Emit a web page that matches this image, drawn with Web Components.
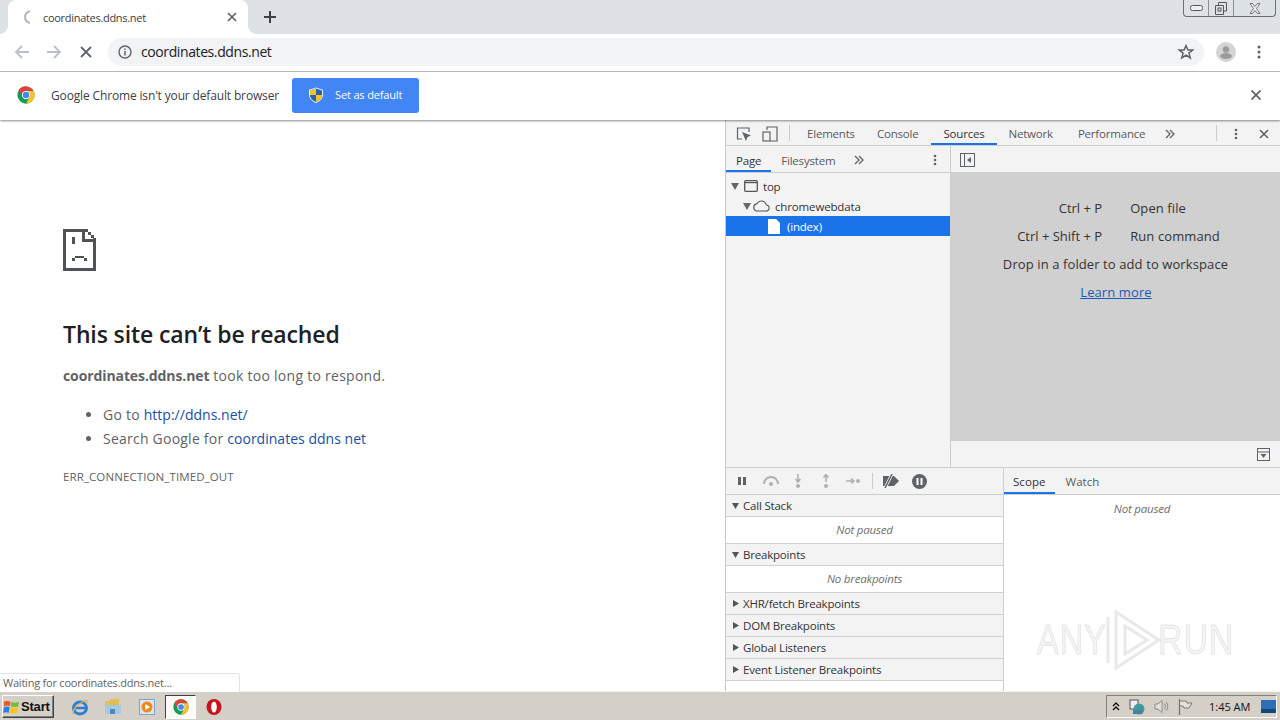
<!DOCTYPE html>
<html>
<head>
<meta charset="utf-8">
<title>coordinates.ddns.net</title>
<style>
html,body{margin:0;height:720px;overflow:hidden;background:#fff;font-family:"Open Sans","Noto Sans",sans-serif;}
body{display:flex;flex-direction:column;width:1280px;position:relative;}
.content{flex:none;height:571px;display:flex;}
</style>
</head>
<body>
<tab-strip></tab-strip>
<nav-bar></nav-bar>
<default-bar></default-bar>
<div class="content">
  <error-page></error-page>
  <dev-tools></dev-tools>
</div>
<task-bar></task-bar>
<status-bubble>Waiting for coordinates.ddns.net...</status-bubble>
<any-mark></any-mark>

<script>
const chromeLogo = s => `<svg width="${s}" height="${s}" viewBox="0 0 48 48" style="display:block">
  <circle cx="24" cy="24" r="23" fill="#0f9d58"/>
  <path d="M24 1A23 23 0 0 1 44 13H24A11 11 0 0 0 14 29L4 12A23 23 0 0 1 24 1Z" fill="#db4437"/>
  <path d="M44 13A23 23 0 0 1 24 47L33 30A11 11 0 0 0 24 13Z" fill="#fbc02d"/>
  <circle cx="24" cy="24" r="11" fill="#fff"/><circle cx="24" cy="24" r="8.5" fill="#4285f4"/></svg>`;

class TabStrip extends HTMLElement {
  constructor(){
    super();
    this.attachShadow({mode:"open"}).innerHTML = `
    <style>
    :host{display:flex;height:34px;background:#dee1e6;justify-content:space-between;font:11px "Open Sans",sans-serif;color:#3c4043;}
    .left{display:flex;align-items:flex-end;}
    .tab{position:relative;width:240px;height:34px;margin-left:8px;background:#fff;border-radius:8px 8px 0 0;display:flex;align-items:center;box-sizing:border-box;padding:0 11px 0 13px;}
    .tab::before,.tab::after{content:"";position:absolute;bottom:0;width:8px;height:8px;}
    .tab::before{left:-8px;background:radial-gradient(circle at 0 0,#dee1e6 7.5px,#fff 8px)}
    .tab::after{right:-8px;background:radial-gradient(circle at 100% 0,#dee1e6 7.5px,#fff 8px)}
    .tab svg.spin{margin-right:8px}
    .tab span{flex:1;letter-spacing:-.3px}
    .plus{margin:0 0 0 16px;align-self:center;display:block}
    .win{display:flex;align-self:flex-start;height:17px;border:1px solid #6a7078;border-top:none;border-radius:0 0 4px 4px;margin-right:4px;width:93px;box-sizing:border-box;}
    .win div{display:flex;align-items:center;justify-content:center;border-right:1px solid #8a9098;box-sizing:border-box}
    .win div:last-child{border:0}
    </style>
    <div class="left">
      <div class="tab">
        <svg class="spin" width="14" height="16" viewBox="0 0 14 16"><path d="M9 2.2A6 6 0 0 0 9 14" fill="none" stroke="#b4b7bb" stroke-width="2"/></svg>
        <span>coordinates.ddns.net</span>
        <svg width="10" height="10" viewBox="0 0 10 10"><path d="M1 1L9 9M9 1L1 9" stroke="#5f6368" stroke-width="1.7"/></svg>
      </div>
      <svg class="plus" width="12" height="12" viewBox="0 0 12 12"><path d="M6 0V12M0 6H12" stroke="#3c4043" stroke-width="2"/></svg>
    </div>
    <div class="win">
      <div style="width:25px"><svg width="13" height="6" viewBox="0 0 13 6"><rect x=".5" y=".5" width="12" height="5" rx="2" fill="#eef0f2" stroke="#555"/></svg></div>
      <div style="width:25px"><svg width="12" height="13" viewBox="0 0 12 13"><path d="M3.5 3V.5H11.5V9H9M.5 3.5H8.5V12.5H.5Z" fill="none" stroke="#555"/><rect x="3" y="6" width="3" height="3" fill="none" stroke="#555"/></svg></div>
      <div style="flex:1"><svg width="12" height="11" viewBox="0 0 12 11"><path d="M1 .5H3.5L6 3.5L8.5 .5H11L7.5 5.5L11 10.5H8.5L6 7.5L3.5 10.5H1L4.5 5.5Z" fill="#f0f2f4" stroke="#555" stroke-width=".8"/></svg></div>
    </div>`;
  }
}
customElements.define('tab-strip', TabStrip);

class NavBar extends HTMLElement {
  constructor(){
    super();
    this.attachShadow({mode:"open"}).innerHTML = `
    <style>
    :host{display:flex;align-items:center;height:38px;box-sizing:border-box;background:#fff;border-bottom:1px solid #bdbdbd;padding:0 0 0 14px;font:14px "Open Sans",sans-serif;color:#202124;}
    .nav{display:flex;gap:16px;align-items:center;margin-right:14px}
    .omni{width:1096px;height:28px;align-self:flex-start;margin-top:4px;border-radius:14px;background:#f1f3f4;display:flex;align-items:center;box-sizing:border-box;padding:0 10px 0 10px;}
    .omni span{flex:1;margin-left:9px;letter-spacing:-.4px;margin-top:-1px}
    .right{display:flex;align-items:center;margin-left:12px;gap:21px}
    .avatar{width:20px;height:20px;border-radius:50%;background:#d4d4d4;display:block}
    </style>
    <div class="nav">
      <svg width="16" height="16" viewBox="0 0 16 16"><path d="M15 8H2M8 2L2 8L8 14" fill="none" stroke="#bcc0c4" stroke-width="1.8"/></svg>
      <svg width="16" height="16" viewBox="0 0 16 16"><path d="M1 8H14M8 2L14 8L8 14" fill="none" stroke="#bcc0c4" stroke-width="1.8"/></svg>
      <svg width="16" height="16" viewBox="0 0 16 16"><path d="M3 3L13 13M13 3L3 13" fill="none" stroke="#5f6368" stroke-width="1.8"/></svg>
    </div>
    <div class="omni">
      <svg width="14" height="14" viewBox="0 0 14 14"><circle cx="7" cy="7" r="6" fill="none" stroke="#5f6368" stroke-width="1.4"/><path d="M7 6V10.5M7 3.4V5" stroke="#5f6368" stroke-width="1.5"/></svg>
      <span>coordinates.ddns.net</span>
      <svg width="16" height="16" viewBox="0 0 16 16"><path d="M8 1.6L9.9 6H14.8L10.9 9.1L12.3 14L8 11.2L3.7 14L5.1 9.1L1.2 6H6.1Z" fill="none" stroke="#5f6368" stroke-width="1.5"/></svg>
    </div>
    <div class="right">
      <svg class="avatar" viewBox="0 0 20 20"><circle cx="10" cy="7.5" r="3.2" fill="#9b9b9b"/><ellipse cx="10" cy="14" rx="6" ry="3" fill="#9b9b9b"/></svg>
      <svg width="4" height="14" viewBox="0 0 4 14"><circle cx="2" cy="2" r="1.5" fill="#5f6368"/><circle cx="2" cy="7" r="1.5" fill="#5f6368"/><circle cx="2" cy="12" r="1.5" fill="#5f6368"/></svg>
    </div>`;
  }
}
customElements.define('nav-bar', NavBar);

class DefaultBar extends HTMLElement {
  constructor(){
    super();
    this.attachShadow({mode:"open"}).innerHTML = `
    <style>
    :host{display:flex;align-items:center;height:49px;box-sizing:border-box;background:#fff;padding:0 0 1px 17px;font:12px "Open Sans",sans-serif;color:#3c4043;box-shadow:0 1px 2px rgba(0,0,0,.45);position:relative;z-index:2}
    .msg{margin-left:16px;letter-spacing:-.15px;width:241px;white-space:nowrap}
    button{all:unset;width:127px;height:35px;background:#4285f4;border-radius:3px;color:#fff;font:11px "Open Sans",sans-serif;letter-spacing:-.15px;display:flex;align-items:center;padding-left:16px;box-sizing:border-box;gap:11px;}
    button span{margin-top:-2px}
    .x{margin-left:auto;margin-right:19px}
    </style>
    ${chromeLogo(18)}
    <span class="msg">Google Chrome isn't your default browser</span>
    <button>
      <svg width="16" height="16" viewBox="0 0 16 16"><path d="M8 .4L15 2.8V8C15 12.2 11.2 14.8 8 16 4.8 14.8 1 12.2 1 8V2.8Z" fill="#e8eef8"/><path d="M8 1.6L14 3.5V8C14 11.6 10.8 13.8 8 14.9 5.2 13.8 2 11.6 2 8V3.5Z" fill="#2f5fb3"/><path d="M8 1.6V8H2V3.5Z" fill="#f3c623"/><path d="M8 8H14C14 11.6 10.8 13.8 8 14.9Z" fill="#f3c623"/></svg>
      <span>Set as default</span>
    </button>
    <svg class="x" width="10" height="10" viewBox="0 0 10 10"><path d="M.5 .5L9.5 9.5M9.5 .5L.5 9.5" stroke="#5f6368" stroke-width="1.8"/></svg>`;
  }
}
customElements.define('default-bar', DefaultBar);

class ErrorPage extends HTMLElement {
  constructor(){
    super();
    this.attachShadow({mode:"open"}).innerHTML = `
    <style>
    :host{display:block;width:725px;flex:none;box-sizing:border-box;padding:109px 0 0 63px;background:#fff;font:14px "Open Sans",sans-serif;color:#5f6368;letter-spacing:.23px}
    svg{display:block}
    h1{font:600 23px "Open Sans",sans-serif;color:#202124;margin:47px 0 0;line-height:32px;letter-spacing:-.115px}
    p{margin:16px 0 0;line-height:20px;letter-spacing:.27px}
    b{font-weight:700;color:#5f6368;letter-spacing:-.1px}
    ul{margin:17px 0 0;padding:0 0 0 40px;}
    li{line-height:24px}
    a{color:#174ea6;text-decoration:none;letter-spacing:.02px}
    .code{font-size:11.5px;margin-top:18px;line-height:16px;color:#5f6368;letter-spacing:.1px}
    </style>
    <svg width="33" height="42" viewBox="0 0 33 42" shape-rendering="crispEdges"><path fill="#505356" fill-rule="evenodd" d="M0 0H25V3H28V6H31V9H33V42H0ZM3 3V39H30V13H19V3ZM22 3V10H30V9H28V6H25V3Z"/><path fill="#505356" d="M9 8H12V15H9ZM12 27H21V29H12ZM9 29H12V32H9ZM21 29H24V32H21Z"/></svg>
    <h1>This site can’t be reached</h1>
    <p><b>coordinates.ddns.net</b> took too long to respond.</p>
    <ul>
      <li>Go to <a>http://ddns.net/</a></li>
      <li>Search Google for <a>coordinates ddns net</a></li>
    </ul>
    <div class="code">ERR_CONNECTION_TIMED_OUT</div>`;
  }
}
customElements.define('error-page', ErrorPage);

class DtTab extends HTMLElement {
  constructor(){
    super();
    this.attachShadow({mode:"open"}).innerHTML = `
    <style>
    :host{display:flex;align-items:center;height:100%;box-sizing:border-box;padding:0 10px;color:#5a5a5a;white-space:nowrap}
    :host([active]){color:#333;border-bottom:2px solid #1a73e8;padding-top:2px}
    </style><slot></slot>`;
  }
}
customElements.define('dt-tab', DtTab);

class DtSection extends HTMLElement {
  constructor(){
    super();
    const open = this.hasAttribute('open');
    this.attachShadow({mode:"open"}).innerHTML = `
    <style>
    :host{display:block;color:#333}
    .head{height:21px;background:#f3f3f3;border-bottom:1px solid #d0d0d0;display:flex;align-items:center;padding-left:6px;gap:4px}
    .body{height:27px;box-sizing:border-box;padding-bottom:2px;background:#fff;border-bottom:1px solid #d0d0d0;display:flex;align-items:center;justify-content:center;font-style:italic;color:#6e6e6e;}
    </style>
    <div class="head">
      <svg width="7" height="7" viewBox="0 0 7 7">${open?'<path d="M0 1H7L3.5 7Z" fill="#555"/>':'<path d="M1 0V7L7 3.5Z" fill="#555"/>'}</svg>
      <span>${this.getAttribute('label')}</span>
    </div>
    ${open?'<div class="body"><slot></slot></div>':''}`;
  }
}
customElements.define('dt-section', DtSection);

class DevTools extends HTMLElement {
  constructor(){
    super();
    this.attachShadow({mode:"open"}).innerHTML = `
    <style>
    :host{display:flex;flex-direction:column;flex:1;min-width:0;border-left:1px solid #c8c8c8;background:#f3f3f3;font:11.5px "Open Sans",sans-serif;letter-spacing:-.2px;color:#333;}
    .bar{display:flex;align-items:center;height:26px;box-sizing:border-box;border-bottom:1px solid #cdcdcd;flex:none}
    .main{padding-left:10px}
    .main .sep{width:1px;height:16px;background:#ccc;margin:0 7px 0 11px}
    .ic{display:block;flex:none}
    .top{height:321px;display:flex;flex:none;border-bottom:1px solid #cdcdcd}
    .nav{width:224px;flex:none;display:flex;flex-direction:column;border-right:1px solid #cdcdcd;background:#f3f3f3}
    .nav .bar{height:27px}
    .tree{padding-top:3px}
    .row{height:20px;display:flex;align-items:center;gap:3px}
    .row.sel{background:#1a73e8;color:#fff;font-weight:400}
    .ed{flex:1;display:flex;flex-direction:column}
    .ed .bar{height:27px;padding:2px 0 0 0}
    .ed .hint{flex:1;background:#d0d0d0;display:grid;grid-template-columns:auto auto;justify-content:center;align-content:start;column-gap:28px;padding:21px 0 0 6px;font-size:13px;letter-spacing:.1px;color:#333;line-height:28px;}
    .ed .hint .k{text-align:right;letter-spacing:0}
    .ed .hint .w{grid-column:1/3;text-align:center;margin-left:-6px}
    .ed .hint a{grid-column:1/3;text-align:center;color:#1a5bb5;text-decoration:underline;margin-left:-5px}
    .ed .foot{height:26px;flex:none;display:flex;justify-content:flex-end;align-items:center;padding-right:10px;}
    .bot{flex:1;display:flex;min-height:0}
    .bot .bar{height:27px}
    .dbg{width:277px;flex:none;border-right:1px solid #cdcdcd;background:#fff}
    .dbg .bar{background:#f3f3f3;padding-left:11px;gap:0}
    .side{flex:1;background:#fff}
    .side .bar{background:#f3f3f3;letter-spacing:.05px}
    .np{text-align:center;font-style:italic;color:#6e6e6e;padding-top:6px}
    .main>svg,.nav .bar>svg{margin-top:2px}
    </style>
    <div class="bar main">
      <svg class="ic" width="16" height="16" viewBox="0 0 16 16"><path d="M6 13H1.5V2H13V6" fill="none" stroke="#5f6368" stroke-width="1.2"/><path d="M6 6L15 9.5L11.5 11L10 15Z" fill="#5f6368"/></svg>
      <svg class="ic" style="margin-left:10px" width="16" height="16" viewBox="0 0 16 16"><path d="M5 4V1H15V15H8" fill="none" stroke="#5f6368" stroke-width="1.2"/><rect x="1" y="6" width="7" height="9" fill="none" stroke="#5f6368" stroke-width="1.2"/></svg>
      <span class="sep"></span>
      <dt-tab style="padding:1px 11px 0 10px">Elements</dt-tab>
      <dt-tab style="padding:1px 13px 0 11px">Console</dt-tab>
      <dt-tab active style="padding:3px 12px 0 12px">Sources</dt-tab>
      <dt-tab style="padding:1px 13px 0 12px">Network</dt-tab>
      <dt-tab style="padding:1px 12px 0 12px">Performance</dt-tab>
      <svg class="ic" style="margin-left:8px" width="10" height="10" viewBox="0 0 10 10"><path d="M1 1L5 5L1 9M5 1L9 5L5 9" fill="none" stroke="#5f6368" stroke-width="1.3"/></svg>
      <span style="width:1px;height:16px;background:#ccc;margin-left:auto"></span>
      <svg class="ic" style="margin-left:17px" width="4" height="12" viewBox="0 0 4 12"><circle cx="2" cy="2" r="1.3" fill="#5f6368"/><circle cx="2" cy="6" r="1.3" fill="#5f6368"/><circle cx="2" cy="10" r="1.3" fill="#5f6368"/></svg>
      <svg class="ic" style="margin:2px 11px 0 21px" width="10" height="10" viewBox="0 0 10 10"><path d="M1 1L9 9M9 1L1 9" stroke="#5f6368" stroke-width="1.6"/></svg>
    </div>
    <div class="top">
      <div class="nav">
        <div class="bar">
          <dt-tab active style="padding-top:4px">Page</dt-tab>
          <dt-tab style="padding:2px 10px 0 10px">Filesystem</dt-tab>
          <svg class="ic" style="margin-left:9px" width="10" height="10" viewBox="0 0 10 10"><path d="M1 1L5 5L1 9M5 1L9 5L5 9" fill="none" stroke="#5f6368" stroke-width="1.3"/></svg>
          <svg class="ic" style="margin-left:auto;margin-right:13px" width="4" height="12" viewBox="0 0 4 12"><circle cx="2" cy="2" r="1.3" fill="#5f6368"/><circle cx="2" cy="6" r="1.3" fill="#5f6368"/><circle cx="2" cy="10" r="1.3" fill="#5f6368"/></svg>
        </div>
        <div class="tree">
          <div class="row" style="padding-left:5px">
            <svg class="ic" width="8" height="7" viewBox="0 0 8 7"><path d="M0 0H8L4 7Z" fill="#666"/></svg>
            <svg class="ic" style="margin:0 2px 0 2px" width="14" height="12" viewBox="0 0 14 12"><rect x=".7" y=".7" width="12.6" height="10.6" rx="1" fill="none" stroke="#555" stroke-width="1.3"/><path d="M1 2.6H13" stroke="#555" stroke-width="1.2"/></svg>
            <span>top</span>
          </div>
          <div class="row" style="padding-left:17px;gap:1px">
            <svg class="ic" width="8" height="7" viewBox="0 0 8 7"><path d="M0 0H8L4 7Z" fill="#666"/></svg>
            <svg class="ic" style="margin-right:4px" width="18" height="12" viewBox="0 0 18 12"><path d="M4.5 11H14A3 3 0 0 0 14.3 5A5 5 0 0 0 5 3.6A3.8 3.8 0 0 0 4.5 11Z" fill="none" stroke="#555" stroke-width="1.1"/></svg>
            <span style="letter-spacing:-.15px">chromewebdata</span>
          </div>
          <div class="row sel" style="padding-left:42px;gap:7px">
            <svg class="ic" width="12" height="15" viewBox="0 0 12 15"><path d="M0 0H8L12 4V15H0Z" fill="#fff"/></svg>
            <span>(index)</span>
          </div>
        </div>
      </div>
      <div class="ed">
        <div class="bar">
          <svg class="ic" style="margin-left:9px" width="15" height="14" viewBox="0 0 15 14"><rect x=".5" y=".5" width="14" height="13" fill="none" stroke="#5f6368"/><path d="M4.5 1V13" stroke="#5f6368"/><path d="M11 4V10L7 7Z" fill="#5f6368"/></svg>
        </div>
        <div class="hint">
          <span class="k">Ctrl + P</span><span>Open file</span>
          <span class="k">Ctrl + Shift + P</span><span>Run command</span>
          <span class="w">Drop in a folder to add to workspace</span>
          <a>Learn more</a>
        </div>
        <div class="foot" style="border-top:1px solid #cdcdcd">
          <svg class="ic" width="13" height="13" viewBox="0 0 13 13"><rect x=".5" y=".5" width="12" height="12" fill="none" stroke="#5f6368"/><path d="M1 4H12" stroke="#5f6368"/><path d="M3.5 6H9.5L6.5 10Z" fill="#5f6368"/></svg>
        </div>
      </div>
    </div>
    <div class="bot">
      <div class="dbg">
        <div class="bar">
          <svg class="ic" width="12" height="10" viewBox="0 0 12 10"><path d="M1 1H4V9H1ZM6 1H9V9H6Z" fill="#5f6368"/></svg>
          <svg class="ic" style="margin-left:13px" width="18" height="12" viewBox="0 0 18 12"><path d="M2 9A7 7 0 0 1 16 9" fill="none" stroke="#b0b0b0" stroke-width="2"/><circle cx="9" cy="9" r="2" fill="#b0b0b0"/></svg>
          <svg class="ic" style="margin-left:14px" width="8" height="14" viewBox="0 0 8 14"><path d="M4 0V7M1.5 5L4 8L6.5 5" fill="none" stroke="#b0b0b0" stroke-width="1.6"/><circle cx="4" cy="12" r="2" fill="#b0b0b0"/></svg>
          <svg class="ic" style="margin-left:20px" width="8" height="14" viewBox="0 0 8 14"><path d="M4 8V1M1.5 3.5L4 0.5L6.5 3.5" fill="none" stroke="#b0b0b0" stroke-width="1.6"/><circle cx="4" cy="12" r="2" fill="#b0b0b0"/></svg>
          <svg class="ic" style="margin-left:16px" width="14" height="8" viewBox="0 0 14 8"><path d="M0 4H7M5 1.5L8 4L5 6.5" fill="none" stroke="#b0b0b0" stroke-width="1.6"/><circle cx="12" cy="4" r="2" fill="#b0b0b0"/></svg>
          <span style="width:1px;height:16px;background:#ccc;margin:0 9px 0 12px"></span>
          <svg class="ic" width="18" height="14" viewBox="0 0 18 14"><path d="M1 2H12L17 7L12 12H1Z" fill="#5f6368"/><path d="M10 0L3 14" stroke="#f3f3f3" stroke-width="3"/><path d="M10 0L3 14" stroke="#5f6368" stroke-width="1.5"/></svg>
          <svg class="ic" style="margin-left:12px" width="15" height="15" viewBox="0 0 15 15"><circle cx="7.5" cy="7.5" r="7.5" fill="#5f6368"/><path d="M4.5 4H6.5V11H4.5ZM8.5 4H10.5V11H8.5Z" fill="#fff"/></svg>
        </div>
        <dt-section label="Call Stack" open>Not paused</dt-section>
        <dt-section label="Breakpoints" open>No breakpoints</dt-section>
        <dt-section label="XHR/fetch Breakpoints"></dt-section>
        <dt-section label="DOM Breakpoints"></dt-section>
        <dt-section label="Global Listeners"></dt-section>
        <dt-section label="Event Listener Breakpoints"></dt-section>
      </div>
      <div class="side">
        <div class="bar">
          <dt-tab active style="padding:2px 10px 0 9px">Scope</dt-tab>
          <dt-tab>Watch</dt-tab>
        </div>
        <div class="np">Not paused</div>
      </div>
    </div>`;
  }
}
customElements.define('dev-tools', DevTools);

class StatusBubble extends HTMLElement {
  constructor(){
    super();
    this.attachShadow({mode:"open"}).innerHTML = `
    <style>
    :host{position:absolute;left:0;top:673px;width:240px;height:19px;box-sizing:border-box;background:#fff;border:1px solid #e3e3e3;border-left:0;border-bottom:0;border-radius:0 3px 0 0;font:11px "Open Sans",sans-serif;color:#5f6368;padding:1px 0 0 3px;letter-spacing:-.22px}
    </style><slot></slot>`;
  }
}
customElements.define('status-bubble', StatusBubble);

class TaskBar extends HTMLElement {
  constructor(){
    super();
    this.attachShadow({mode:"open"}).innerHTML = `
    <style>
    :host{display:flex;align-items:center;height:29px;box-sizing:border-box;padding-top:1px;background:#d4d0c8;border-top:1px solid #f5f3ee;font:11px "Open Sans",sans-serif;color:#111;}
    .start{width:52px;height:23px;margin-left:2px;box-sizing:border-box;display:flex;align-items:center;gap:1px;padding-left:0;border:1px solid;border-color:#fff #404040 #404040 #fff;box-shadow:inset -1px -1px 0 #808080;font:700 13px "Liberation Sans",sans-serif;letter-spacing:-.2px}
    .apps{display:flex;align-items:center;margin-left:17px}
    .apps svg{display:block}
    .act{width:31px;height:24px;margin:0 10px 0 10px;display:flex;align-items:center;justify-content:center;background:#fbfaf8;border:1px solid;border-color:#404040 #fff #fff #404040;box-sizing:border-box}
    .tray{margin-left:auto;margin-right:3px;width:171px;height:23px;box-sizing:border-box;border:1px solid;border-color:#808080 #fff #fff #808080;display:flex;align-items:center;padding-left:5px;gap:0}
    .tray span{margin-left:16px;font-size:11px;white-space:nowrap}
    </style>
    <div class="start">
      <svg width="17" height="16" viewBox="0 0 18 17"><path d="M1 3Q4 1 8 3L7 8Q4 6 1 8Z" fill="#e8562a"/><path d="M9 3Q12 5 17 3L16 8Q12 9 8 8Z" fill="#7cb82f"/><path d="M1 9Q4 7 7 9L6 15Q3 13 0 15Z" fill="#2f7de1"/><path d="M8 9Q11 10 16 9L15 15Q11 16 7 15Z" fill="#f5c518"/></svg>
      <span>Start</span>
    </div>
    <div class="apps">
      <svg width="18" height="18" viewBox="0 0 18 18"><ellipse cx="9" cy="10" rx="6.5" ry="6" fill="none" stroke="#2a7fd4" stroke-width="3"/><path d="M3 10H15" stroke="#2a7fd4" stroke-width="2.5"/><path d="M2 16Q1 10 13 3Q17 1 16 5" fill="none" stroke="#e2b23c" stroke-width="1.3"/></svg>
      <svg style="margin-left:15px" width="18" height="17" viewBox="0 0 18 17"><path d="M1 3H6L7 1H15V16H1Z" fill="#e0bd55"/><path d="M1 7H17V16H1Z" fill="#a5c9e2"/><path d="M6 16V11H11V16Z" fill="#4d8cb8"/></svg>
      <svg style="margin-left:17px" width="16" height="16" viewBox="0 0 16 16"><rect x=".5" y=".5" width="15" height="15" fill="#dbe7f5" stroke="#7fa3cf"/><circle cx="8" cy="8" r="5.5" fill="#ee8a1d"/><path d="M6.3 5L11 8L6.3 11Z" fill="#fff"/></svg>
      <div class="act">${chromeLogo(16)}</div>
      <svg width="16" height="18" viewBox="0 0 16 18"><ellipse cx="8" cy="9" rx="7.5" ry="8" fill="#c4161c"/><ellipse cx="8" cy="9" rx="2.8" ry="5.5" fill="#fff"/></svg>
    </div>
    <div class="tray">
      <svg width="8" height="9" viewBox="0 0 8 9"><path d="M1 4L4 1L7 4M1 8L4 5L7 8" fill="none" stroke="#111" stroke-width="1.4"/></svg>
      <svg style="margin-left:9px" width="16" height="16" viewBox="0 0 16 16"><rect x="1" y="1" width="8" height="9" fill="#eee" stroke="#555"/><circle cx="10" cy="10" r="5.5" fill="#3f9c9c"/><rect x="4" y="11" width="9" height="4" fill="#4a7fa0"/></svg>
      <svg style="margin-left:9px" width="15" height="15" viewBox="0 0 15 15"><path d="M1 5H4L8 1.5V13.5L4 10H1Z" fill="#e3e1dc" stroke="#8a8a8a"/><path d="M10 4.5A4 4 0 0 1 10 10.5M12 3A6.5 6.5 0 0 1 12 12" fill="none" stroke="#8a8a8a"/></svg>
      <svg style="margin-left:9px" width="15" height="16" viewBox="0 0 15 16"><path d="M1.5 0V16" stroke="#6f6f6f" stroke-width="1.2"/><path d="M2 2H8L9 4H14L11 9H6L5 7H2" fill="#e3e1dc" stroke="#7a7a7a"/></svg>
      <span>1:45 AM</span>
      <svg style="margin-left:auto" width="15" height="13" viewBox="0 0 15 13"><rect width="15" height="13" fill="#2a6fb8"/><rect y="9" width="15" height="4" fill="#15477d"/></svg>
    </div>`;
  }
}
customElements.define('task-bar', TaskBar);

class AnyMark extends HTMLElement {
  constructor(){
    super();
    this.attachShadow({mode:"open"}).innerHTML = `
    <style>
    :host{position:absolute;left:1037px;top:609px;width:196px;height:62px;display:flex;align-items:center;pointer-events:none;font:42px "Liberation Sans",sans-serif;color:rgba(225,225,225,.35);filter:blur(.4px)}
    span{display:inline-block;transform:scaleX(.78);transform-origin:left center;letter-spacing:1px;-webkit-text-stroke:1px rgba(205,205,205,.45);white-space:nowrap}
    svg{display:block;flex:none}
    </style>
    <span style="width:66px">ANY</span>
    <svg width="60" height="62" viewBox="0 0 60 62"><path d="M5 8V54M13 3L56 31L13 59ZM22 17L44 31L22 45Z" fill="none" stroke="rgba(215,215,215,.55)" stroke-width="3"/></svg>
    <span style="width:70px;margin-left:-5px;transform:scaleX(.81)">RUN</span>`;
  }
}
customElements.define('any-mark', AnyMark);
</script>
</body>
</html>
